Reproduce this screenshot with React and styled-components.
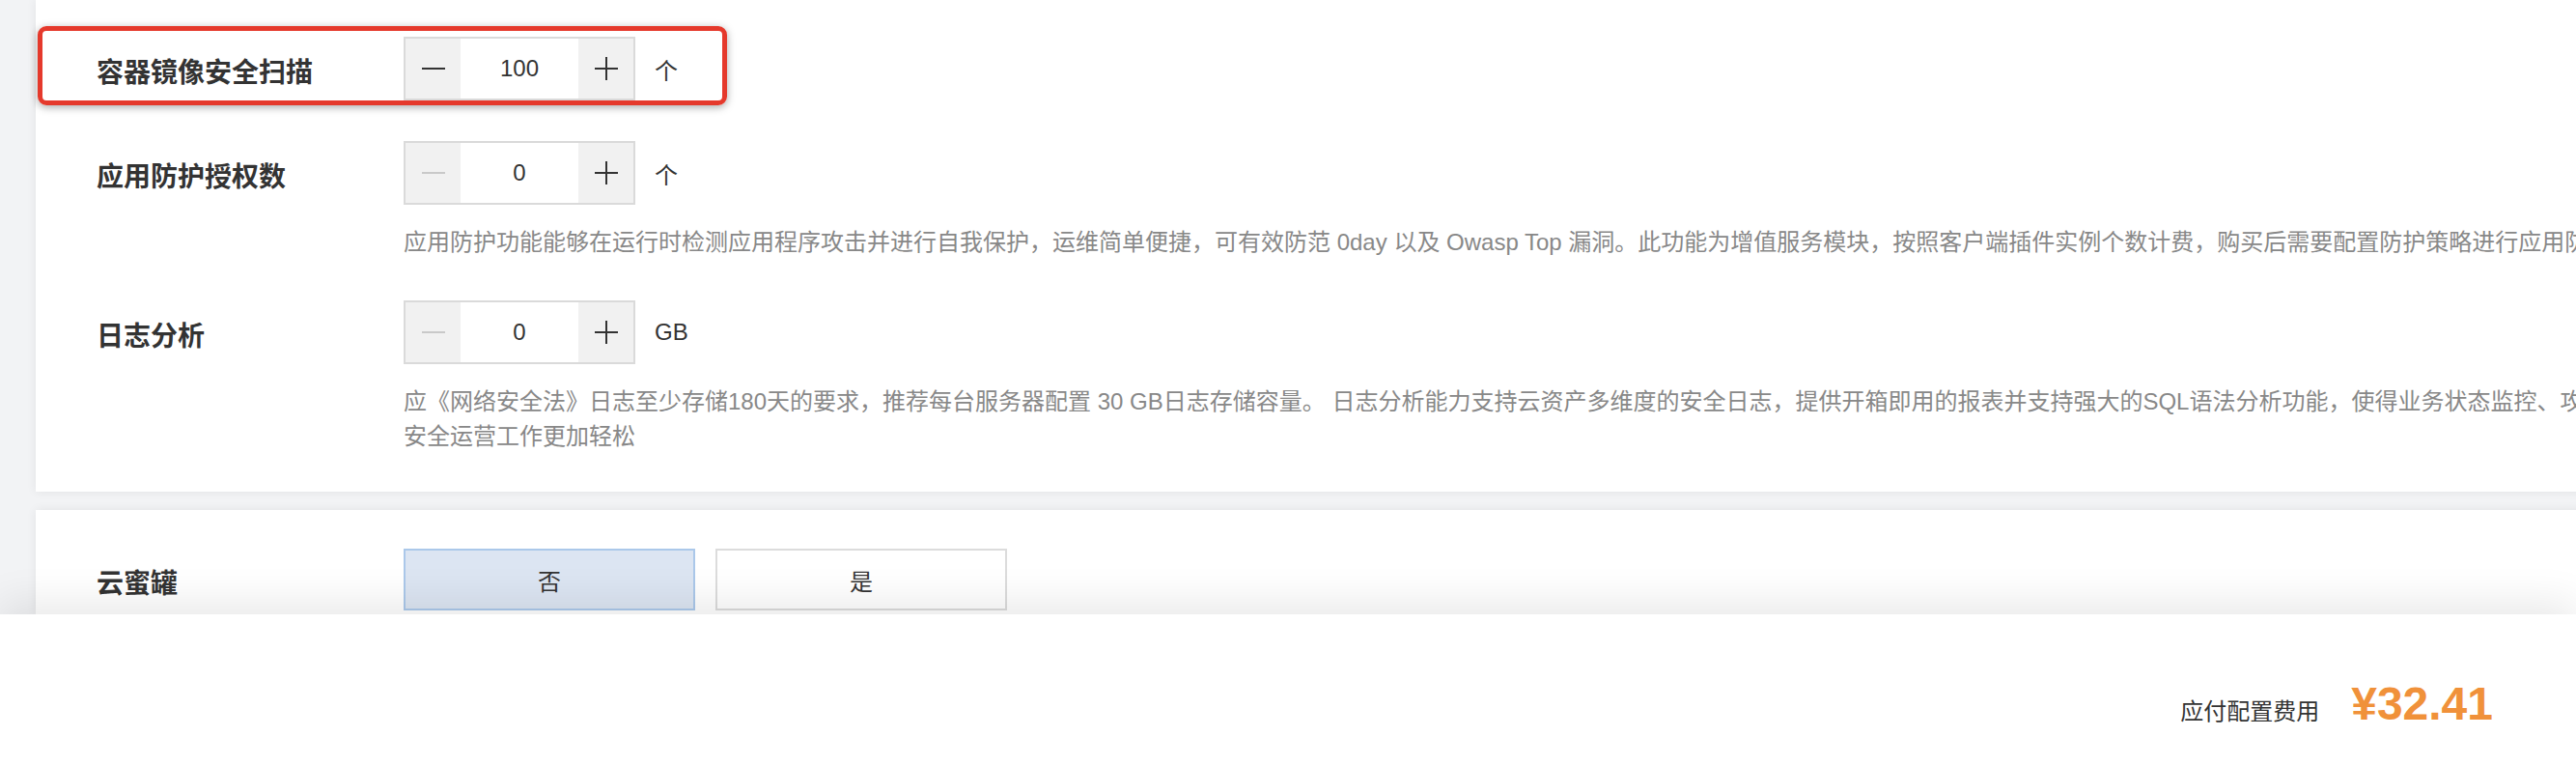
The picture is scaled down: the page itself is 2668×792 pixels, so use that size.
import React from "react";
import styled, { createGlobalStyle } from "styled-components";

const Global = createGlobalStyle`
  html, body {
    margin: 0;
    padding: 0;
    background: #f2f3f5;
    overflow: hidden;
  }
  body {
    font-family: "Liberation Sans", "Noto Sans CJK SC", sans-serif;
  }
  * { box-sizing: border-box; }
`;

const Page = styled.div`
  width: 2668px;
  height: 792px;
  display: flex;
  flex-direction: column;
  overflow: hidden;
  background: #f2f3f5;
`;

const Main = styled.main`
  flex: 0 0 636px;
  overflow: hidden;
  padding-left: 37px;
  display: flex;
  flex-direction: column;
  gap: 19px;
`;

const Card = styled.section`
  position: relative;
  flex: ${(p) => (p.$grow ? "1 1 auto" : "0 0 auto")};
  margin-right: -40px;
  background: #fff;
  box-shadow: 0 0 10px rgba(0, 0, 0, 0.07);
  padding: ${(p) => p.$pt}px 0 ${(p) => p.$pb}px 63px;
  display: flex;
  flex-direction: column;
  gap: 42px;
`;

const Highlight = styled.div`
  position: absolute;
  left: 2px;
  top: 27px;
  width: 714px;
  height: 82px;
  border: 5px solid #e5392c;
  border-radius: 9px;
  box-shadow: 0 2px 9px rgba(0, 0, 0, 0.35);
  pointer-events: none;
`;

const Field = styled.div`
  display: flex;
  flex-direction: column;
`;

const FieldRow = styled.div`
  display: flex;
  align-items: center;
`;

const Label = styled.div`
  width: 318px;
  flex-shrink: 0;
  padding-top: 10px;
  font-size: 28px;
  line-height: 36px;
  font-weight: 700;
  color: #333;
`;

const Stepper = styled.div`
  display: flex;
  width: 240px;
  height: 66px;
  border: 2px solid #dadada;
  background: #fff;
`;

const StepButton = styled.div`
  width: 57px;
  flex-shrink: 0;
  background: #f1f1f1;
  display: flex;
  align-items: center;
  justify-content: center;
  color: ${(p) => (p.$disabled ? "#c9c9c9" : "#333")};
`;

const StepValue = styled.div`
  flex: 1;
  display: flex;
  align-items: center;
  justify-content: center;
  font-size: 24px;
  color: #333;
`;

const Unit = styled.span`
  margin-left: 20px;
  font-size: 24px;
  color: #333;
`;

const Desc = styled.div`
  margin: 21px 0 0 318px;
  font-size: 24px;
  line-height: 36px;
  color: #888;
  white-space: nowrap;
`;

const DescLine = styled.div``;

const ToggleGroup = styled.div`
  display: flex;
  gap: 21px;
`;

const Toggle = styled.div`
  width: 302px;
  height: 64px;
  display: flex;
  align-items: center;
  justify-content: center;
  font-size: 24px;
  color: #333;
  border: 2px solid ${(p) => (p.$active ? "#abc8ea" : "#dcdcdc")};
  background: ${(p) => (p.$active ? "#dce5f2" : "#fff")};
`;

const Footer = styled.footer`
  position: relative;
  z-index: 1;
  flex: 0 0 156px;
  background: #fff;
  box-shadow: 0 -12px 40px rgba(0, 0, 0, 0.09);
  display: flex;
  justify-content: flex-end;
  align-items: baseline;
  padding: 69px 86px 0 0;
  gap: 33px;
`;

const TotalLabel = styled.span`
  font-size: 24px;
  line-height: 24px;
  color: #333;
`;

const Price = styled.span`
  font-size: 48px;
  line-height: 48px;
  font-weight: 700;
  color: #f0913a;
`;

const MinusIcon = () => (
  <svg width="24" height="24" viewBox="0 0 24 24">
    <line x1="0" y1="12" x2="24" y2="12" stroke="currentColor" strokeWidth="2" />
  </svg>
);

const PlusIcon = () => (
  <svg width="24" height="24" viewBox="0 0 24 24">
    <line x1="0" y1="12" x2="24" y2="12" stroke="currentColor" strokeWidth="2" />
    <line x1="12" y1="0" x2="12" y2="24" stroke="currentColor" strokeWidth="2" />
  </svg>
);

const NumberInput = ({ value }) => (
  <Stepper>
    <StepButton $disabled={value <= 0}>
      <MinusIcon />
    </StepButton>
    <StepValue>{value}</StepValue>
    <StepButton>
      <PlusIcon />
    </StepButton>
  </Stepper>
);

const fields = [
  { label: "容器镜像安全扫描", value: 100, unit: "个" },
  {
    label: "应用防护授权数",
    value: 0,
    unit: "个",
    desc: [
      "应用防护功能能够在运行时检测应用程序攻击并进行自我保护，运维简单便捷，可有效防范 0day 以及 Owasp Top 漏洞。此功能为增值服务模块，按照客户端插件实例个数计费，购买后需要配置防护策略进行应用防护。",
    ],
  },
  {
    label: "日志分析",
    value: 0,
    unit: "GB",
    desc: [
      "应《网络安全法》日志至少存储180天的要求，推荐每台服务器配置 30 GB日志存储容量。 日志分析能力支持云资产多维度的安全日志，提供开箱即用的报表并支持强大的SQL语法分析功能，使得业务状态监控、攻击溯源、事件调查和",
      "安全运营工作更加轻松",
    ],
  },
];

export default function App() {
  return (
    <>
      <Global />
      <Page>
        <Main>
          <Card $pt={38} $pb={39}>
            {fields.map((f) => (
              <Field key={f.label}>
                <FieldRow>
                  <Label>{f.label}</Label>
                  <NumberInput value={f.value} />
                  <Unit>{f.unit}</Unit>
                </FieldRow>
                {f.desc && (
                  <Desc>
                    {f.desc.map((line) => (
                      <DescLine key={line}>{line}</DescLine>
                    ))}
                  </Desc>
                )}
              </Field>
            ))}
            <Highlight />
          </Card>
          <Card $pt={40} $pb={0} $grow>
            <FieldRow>
              <Label>云蜜罐</Label>
              <ToggleGroup>
                <Toggle $active>否</Toggle>
                <Toggle>是</Toggle>
              </ToggleGroup>
            </FieldRow>
          </Card>
        </Main>
        <Footer>
          <TotalLabel>应付配置费用</TotalLabel>
          <Price>¥32.41</Price>
        </Footer>
      </Page>
    </>
  );
}
